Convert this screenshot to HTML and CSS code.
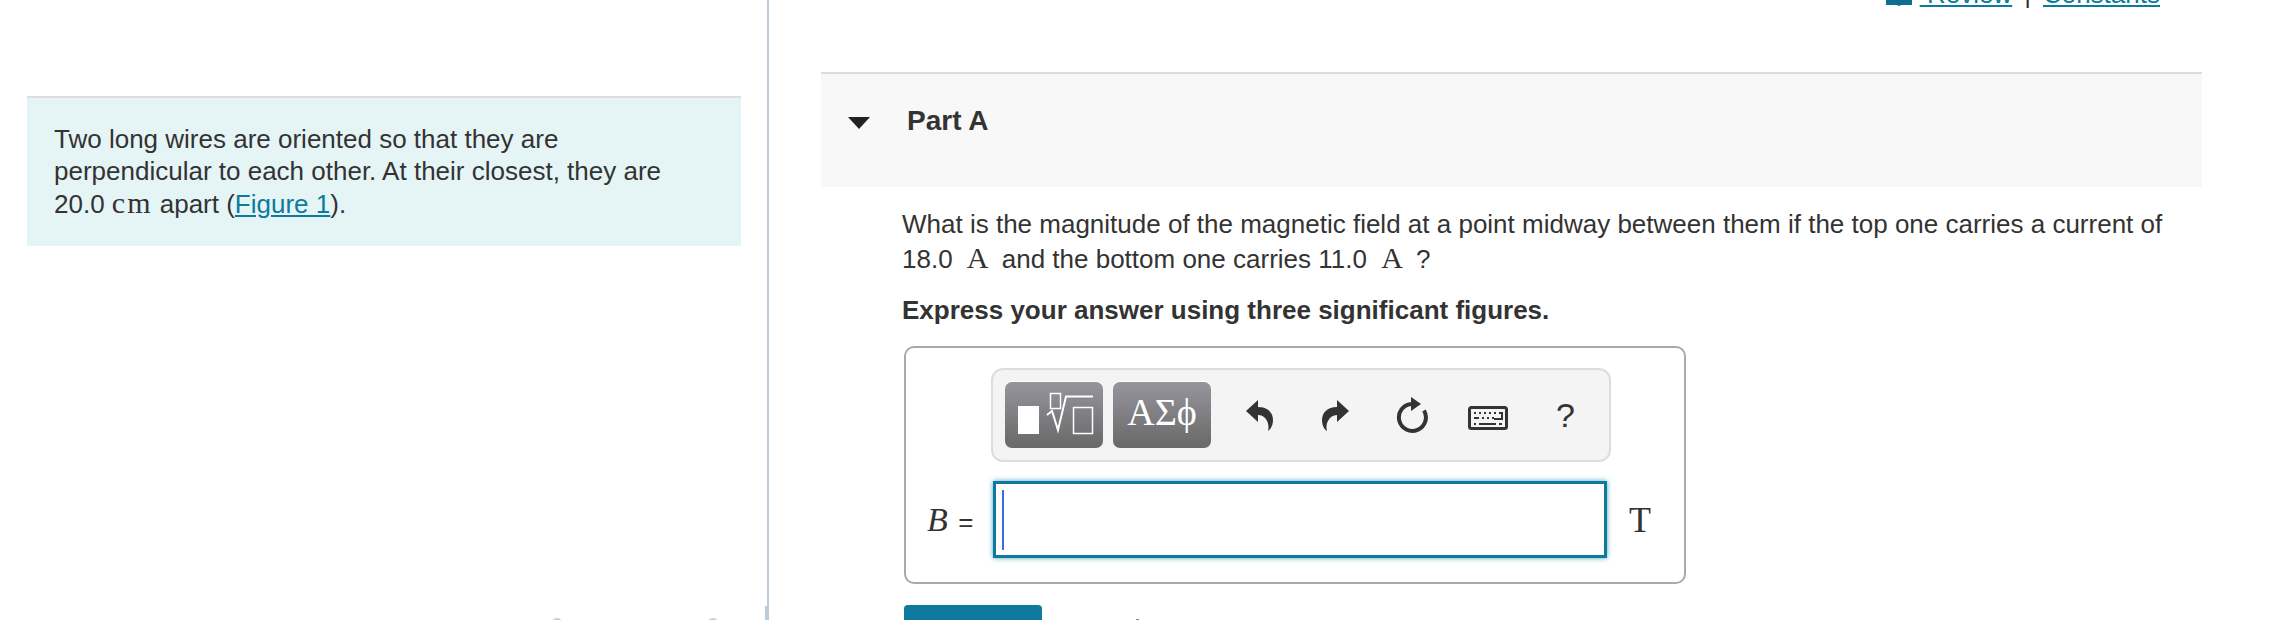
FILE: index.html
```html
<!DOCTYPE html>
<html lang="en">
<head>
    <meta charset="UTF-8">
    <title>Part A</title>
    <link rel="stylesheet" href="styles.css">
</head>
<body>
    <div class="page">
        <div class="left">
            <div class="intro">
                Two long wires are oriented so that they are<br>
                perpendicular to each other. At their closest, they are<br>
                20.0 <span class="unit">cm</span> apart (<a href="#">Figure 1</a>).
            </div>
            <div class="pager">
                <span class="pager-btn"></span>
                <span class="pager-btn"></span>
            </div>
        </div>
        <div class="right">
            <div class="toplinks">
                <svg class="book" width="26" height="6" viewBox="0 0 26 6">
                    <path d="M0 0H26V5H15L13 6L11 5H0Z" fill="#0d6f90"/>
                </svg>
                <a href="#">&nbsp;Review</a>
                <span class="sep">|</span>
                <a href="#">Constants</a>
            </div>
            <div class="part-head">
                <span class="arrow"></span>
                <span class="part-title">Part A</span>
            </div>
            <div class="part-body">
                <p class="question">
                    What is the magnitude of the magnetic field at a point midway between them if the top one carries a current of<br>
                    18.0 <span class="unit unit-a">A</span> and the bottom one carries 11.0 <span class="unit unit-a">A</span> ?
                </p>
                <p class="hint">Express your answer using three significant figures.</p>
                <div class="answer">
                    <div class="toolbar">
                        <button class="tool-btn">
                            <svg width="98" height="66" viewBox="0 0 98 66">
                                <rect x="13" y="24" width="21" height="28" fill="#fff"/>
                                <rect x="45.5" y="11.5" width="10" height="15" fill="none" stroke="#fff" stroke-width="1.5"/>
                                <path d="M42 33L47 29L53 48L61 14.500H88" fill="none" stroke="#fff" stroke-width="2"/>
                                <rect x="68.500" y="25.500" width="19" height="26" fill="none" stroke="#fff" stroke-width="1.5"/>
                            </svg>
                        </button>
                        <button class="tool-btn tool-greek">ΑΣϕ</button>
                        <svg class="undo" width="27" height="31" viewBox="0 0 27 31">
                            <path d="M0 11L12 0V7C22 7 27 13 27 20C27 25 25 29 22 31C24 24 20 15 12 15V22Z" fill="#333"/>
                        </svg>
                        <svg class="redo" width="27" height="31" viewBox="0 0 27 31">
                            <path d="M27 11L15 0V7C5 7 0 13 0 20C0 25 2 29 5 31C3 24 7 15 15 15V22Z" fill="#333"/>
                        </svg>
                        <svg class="reset" width="33" height="36" viewBox="0 0 33 36">
                            <path d="M15 7A13.500 13.500 0 1 0 28 13.500" fill="none" stroke="#333" stroke-width="4"/>
                            <path d="M15 0L25 7L15 14Z" fill="#333"/>
                        </svg>
                        <svg class="keyboard" width="40" height="24" viewBox="0 0 40 24">
                            <rect x="1.500" y="1.500" width="37" height="21" rx="2" fill="none" stroke="#333" stroke-width="3"/>
                            <path d="M6 7H8M11 7H13M16 7H18M21 7H23M26 7H28M31 7H34V13H26M6 12H11M14 12H16M19 12H21M24 12H26M6 18H8M11 18H28M31 18H34" fill="none" stroke="#333" stroke-width="2"/>
                        </svg>
                        <span class="help">?</span>
                    </div>
                    <div class="answer-row">
                        <span class="var"><i>B</i> <span class="equals">=</span></span>
                        <div class="math-input"><span class="caret"></span></div>
                        <span class="answer-unit">T</span>
                    </div>
                </div>
                <div class="actions">
                    <button class="submit">Submit</button>
                    <a href="#">Previous Answers</a>
                    <a href="#">Request Answer</a>
                </div>
            </div>
        </div>
    </div>
</body>
</html>
```
FILE: styles.css
```css
body {
    margin: 0;
    font-family: "Liberation Sans", Arial, sans-serif;
    font-size: 26px;
    color: #333;
    background-color: #fff;
}

a {
    color: #0d7a9c;
}

.page {
    display: flex;
    height: 620px;
    overflow: hidden;
}

.left {
    position: relative;
    width: 769px;
    flex-shrink: 0;
    box-sizing: border-box;
    padding: 96px 26px 0 27px;
    border-right: 2px solid #bccbdc;
}

/* small thicker bit of the divider at the bottom */
.left::after {
    content: "";
    position: absolute;
    right: 0;
    bottom: 0;
    width: 2px;
    height: 14px;
    background-color: #bccbdc;
}

.intro {
    height: 150px;
    padding: 25px 27px 0;
    box-sizing: border-box;
    background-color: #e5f5f6;
    border-top: 2px solid #ddd;
    line-height: 32px;
}

.unit {
    font-family: "Liberation Serif", serif;
    font-size: 30px;
    letter-spacing: 2px;
}

.unit-a {
    margin: 0 6px 0 7px;
    letter-spacing: 0;
}

.pager {
    display: flex;
    gap: 144px;
    margin: 372px 0 0 524px;
}

.pager-btn {
    width: 12px;
    height: 12px;
    border-radius: 50%;
    background-color: #ccc;
}

.right {
    flex: 1;
    padding: 0 72px 0 52px;
}

.toplinks {
    display: flex;
    justify-content: flex-end;
    align-items: flex-end;
    gap: 12px;
    height: 9px;
    margin-right: 42px;
    line-height: 30px;
}

.book {
    margin-right: -4px;
    margin-bottom: 3px;
}

.sep {
    color: #333;
}

.part-head {
    display: flex;
    align-items: flex-start;
    height: 115px;
    margin-top: 63px;
    padding-top: 32px;
    box-sizing: border-box;
    background-color: #f8f8f8;
    border-top: 2px solid #ddd;
}

.arrow {
    width: 0;
    height: 0;
    margin: 11px 0 0 27px;
    border-left: 11px solid transparent;
    border-right: 11px solid transparent;
    border-top: 12px solid #222;
}

.part-title {
    margin-left: 37px;
    font-size: 28px;
    font-weight: bold;
    line-height: 30px;
}

.part-body {
    padding-left: 81px;
}

.question {
    margin: 21px 0 0;
    line-height: 33px;
    white-space: nowrap;
}

.hint {
    margin: 18px 0 0;
    font-weight: bold;
    line-height: 32px;
}

.answer {
    width: 782px;
    height: 238px;
    box-sizing: border-box;
    margin: 20px 0 0 2px;
    padding: 20px 0 0 85px;
    border: 2px solid #aaa;
    border-radius: 10px;
}

.toolbar {
    display: flex;
    align-items: center;
    width: 620px;
    height: 94px;
    box-sizing: border-box;
    padding-left: 12px;
    background-color: #f4f4f4;
    border: 2px solid #ddd;
    border-radius: 12px;
}

.tool-btn {
    width: 98px;
    height: 66px;
    padding: 0;
    margin-right: 10px;
    border: none;
    border-radius: 7px;
    background: linear-gradient(#96959c, #686868);
    box-shadow: 0 -1px 0 #fff;
}

.tool-btn svg {
    display: block;
}

.tool-greek {
    padding-bottom: 6px;
    font-family: "Liberation Serif", serif;
    font-size: 38px;
    color: #fff;
}

.undo {
    margin-left: 25px;
}

.redo {
    margin-left: 49px;
}

.reset {
    margin-left: 47px;
}

.keyboard {
    margin: 6px 0 0 39px;
}

.help {
    margin-left: 48px;
    font-size: 34px;
}

.answer-row {
    display: flex;
    align-items: center;
    height: 77px;
    margin: 19px 0 0 -64px;
}

.var {
    width: 66px;
    flex-shrink: 0;
    font-family: "Liberation Serif", serif;
    font-size: 34px;
    white-space: nowrap;
}

.equals {
    margin-left: 2px;
    font-family: "Liberation Sans", sans-serif;
    font-size: 26px;
}

.math-input {
    display: flex;
    align-items: center;
    width: 614px;
    height: 77px;
    box-sizing: border-box;
    padding-left: 6px;
    border: 3px solid #0e7a9e;
    box-shadow: 0 0 5px #4ba3bd;
}

.caret {
    width: 2px;
    height: 60px;
    background-color: #3f69e0;
}

.answer-unit {
    margin-left: 22px;
    font-family: "Liberation Serif", serif;
    font-size: 36px;
}

.actions {
    display: flex;
    align-items: flex-start;
    gap: 28px;
    margin: 21px 0 0 2px;
}

.actions a {
    margin-top: 9px;
    line-height: 30px;
    text-decoration: none;
}

.submit {
    width: 138px;
    height: 50px;
    margin-right: 11px;
    padding: 0;
    border: none;
    border-radius: 4px;
    font-family: inherit;
    font-size: 26px;
    color: #fff;
    background-color: #0e7a9e;
}
```
